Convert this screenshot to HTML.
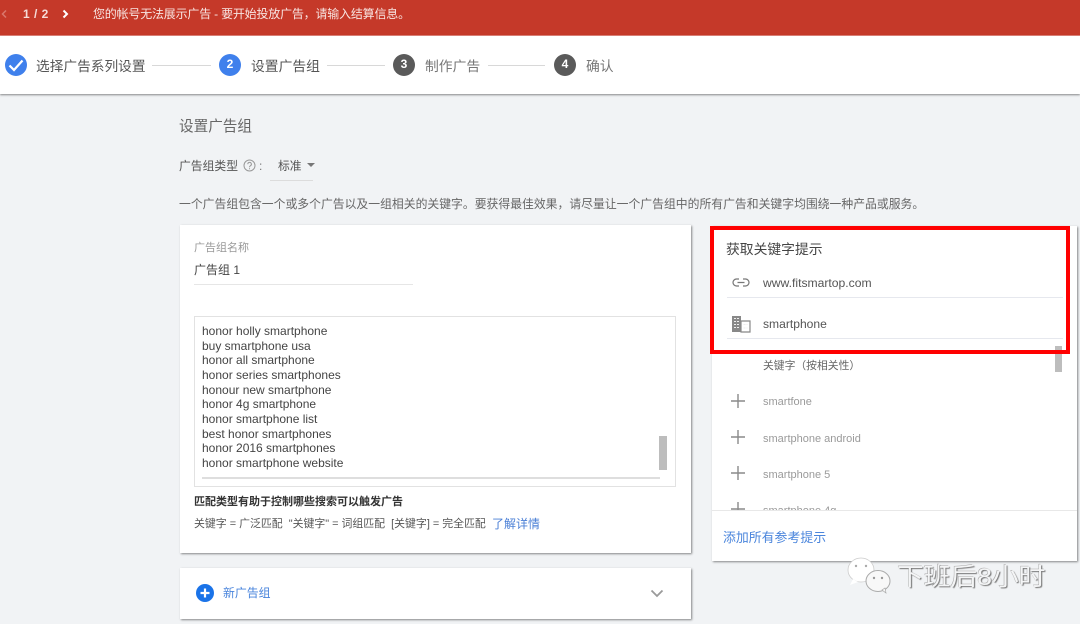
<!DOCTYPE html>
<html style="background:#f1f3f5"><head><meta charset="utf-8">
<style>
html,body{margin:0;padding:0}
body{width:1080px;height:624px;overflow:hidden;background:#f1f3f5;position:relative;font-family:"Liberation Sans","Noto Sans CJK SC",sans-serif;color:#555;filter:blur(.3px)}
.t{position:absolute;white-space:nowrap;line-height:18px;height:18px}
.b{position:absolute}
.card{position:absolute;background:#fff;box-shadow:1px 1px 2px rgba(0,0,0,.45)}
.c{position:absolute;width:22px;height:22px;border-radius:50%;color:#fff;font-size:12px;line-height:21px;text-align:center;font-weight:bold}
.ln{position:absolute;height:1px;background:#d8d8d8}
.k{color:#444;font-size:12px;line-height:14.65px}
</style></head><body>
<div class="b" style="left:0;top:0;width:1080px;height:35px;background:#c53929"></div>
<div class="b" style="left:0;top:35px;width:1080px;height:1px;background:#e0837a"></div>
<div class="b" style="left:0;top:36px;width:1080px;height:58px;background:#fff;box-shadow:0 1px 2px rgba(0,0,0,.45)"></div>
<svg class="b" style="left:0;top:6px" width="80" height="16"><path d="M6 4.500L2.500 8 6 11.500" fill="none" stroke="#d9776c" stroke-width="1.500"/><path d="M63.500 4.500L67 8l-3.500 3.500" fill="none" stroke="#fff" stroke-width="2"/></svg>
<div class="t" style="left:23px;top:5px;font-size:12px;color:#f6dcd8;font-weight:bold;letter-spacing:.5px">1 / 2</div>
<div class="t" style="left:93px;top:5px;font-size:12px;color:#f8e4e1;letter-spacing:-.2px">您的帐号无法展示广告 - 要开始投放广告，请输入结算信息。</div>

<svg class="b" style="left:5px;top:54px" width="22" height="22"><circle cx="11" cy="11" r="11" fill="#3f80ec"/><path d="M4.500 11.500l4.500 4.500 8.500-9.500" fill="none" stroke="#fff" stroke-width="2.200"/></svg>
<div class="t" style="left:36px;top:58px;font-size:13.700px;color:#555">选择广告系列设置</div>
<div class="ln" style="left:152px;top:65px;width:59px"></div>
<div class="c" style="left:219px;top:54px;background:#3f80ec">2</div>
<div class="t" style="left:251px;top:58px;font-size:13.800px;color:#555">设置广告组</div>
<div class="ln" style="left:327px;top:65px;width:58px"></div>
<div class="c" style="left:393px;top:54px;background:#5a5a5a">3</div>
<div class="t" style="left:425px;top:58px;font-size:13.800px;color:#777">制作广告</div>
<div class="ln" style="left:488px;top:65px;width:57px"></div>
<div class="c" style="left:554px;top:54px;background:#5a5a5a">4</div>
<div class="t" style="left:586px;top:58px;font-size:13.800px;color:#777">确认</div>

<div class="t" style="left:179px;top:118px;font-size:14.600px;color:#666">设置广告组</div>
<div class="t" style="left:179px;top:157px;font-size:11.800px;color:#555">广告组类型</div>
<svg class="b" style="left:242px;top:158px" width="15" height="15"><circle cx="7.500" cy="7.500" r="5.500" fill="none" stroke="#999" stroke-width="1"/><path d="M5.800 6.200a1.800 1.800 0 1 1 2.700 1.500c-.6.400-1 .7-1 1.500M7.500 10.200v1" fill="none" stroke="#999" stroke-width="1"/></svg>
<div class="t" style="left:259px;top:157px;font-size:12px;color:#777">:</div>
<div class="t" style="left:278px;top:157px;font-size:11.800px;color:#555">标准</div>
<div class="b" style="left:307px;top:163px;width:0;height:0;border-left:4.500px solid transparent;border-right:4.500px solid transparent;border-top:4.500px solid #777"></div>
<div class="ln" style="top:180px;width:43px;background:#dcdcdc;left:270px"></div>
<div class="t" style="left:179px;top:195px;font-size:11.840px;color:#666">一个广告组包含一个或多个广告以及一组相关的关键字。要获得最佳效果，请尽量让一个广告组中的所有广告和关键字均围绕一种产品或服务。</div>

<div class="card" style="left:180px;top:225px;width:511px;height:328px"></div>
<div class="t" style="left:194px;top:239px;font-size:11px;color:#999">广告组名称</div>
<div class="t" style="left:194px;top:261px;font-size:12px;color:#444">广告组 1</div>
<div class="ln" style="left:194px;top:284px;width:219px;background:#e6e6e6"></div>
<div class="b" style="left:194px;top:316px;width:480px;height:169px;border:1px solid #e2e2e2"></div>
<div class="t k" style="left:202px;top:324px;height:auto;line-height:14.650px;white-space:pre">honor holly smartphone
buy smartphone usa
honor all smartphone
honor series smartphones
honour new smartphone
honor 4g smartphone
honor smartphone list
best honor smartphones
honor 2016 smartphones
honor smartphone website</div>
<div class="b" style="left:659px;top:436px;width:8px;height:34px;background:#bdbdbd"></div>
<div class="b" style="left:202px;top:477px;width:458px;height:2px;background:#dedede"></div>
<div class="t" style="left:194px;top:493px;font-size:11px;color:#333;font-weight:bold">匹配类型有助于控制哪些搜索可以触发广告</div>
<div class="t" style="left:194px;top:515px;font-size:10.900px;color:#555">关键字 = 广泛匹配 &nbsp;"关键字" = 词组匹配 &nbsp;[关键字] = 完全匹配</div>
<div class="t" style="left:492px;top:515px;font-size:12px;color:#4a7fd6">了解详情</div>

<div class="card" style="left:180px;top:568px;width:511px;height:51px"></div>
<svg class="b" style="left:195px;top:583px" width="20" height="20"><circle cx="10" cy="10" r="9" fill="#1a73e8"/><path d="M10 5.500v9M5.500 10h9" stroke="#fff" stroke-width="2.200"/></svg>
<div class="t" style="left:223px;top:584px;font-size:11.900px;color:#4a85dc">新广告组</div>
<svg class="b" style="left:650px;top:587px" width="14" height="12"><path d="M1.500 3.500L7 9l5.500-5.500" fill="none" stroke="#9a9a9a" stroke-width="1.800"/></svg>

<div class="card" style="left:712px;top:226px;width:365px;height:335px"></div>
<div class="t" style="left:726px;top:241px;font-size:13.800px;color:#444">获取关键字提示</div>
<svg class="b" style="left:731px;top:276px" width="20" height="14"><path d="M8 3H5.500a3.500 3.500 0 0 0 0 7H8M12 3h2.500a3.500 3.500 0 0 1 0 7H12M6.500 6.500h7" fill="none" stroke="#777" stroke-width="1.200"/></svg>
<div class="t" style="left:763px;top:274px;font-size:12.150px;color:#555">www.fitsmartop.com</div>
<div class="ln" style="left:727px;top:297px;width:336px;background:#e6e8ee"></div>
<svg class="b" style="left:731px;top:315px" width="20" height="18"><path d="M1 1h9v16H1z" fill="#888"/><path d="M10 6h9v11h-9z" fill="#fff" stroke="#888" stroke-width="1.200"/><path d="M3 3.500h5M3 6.500h5M3 9.500h5M3 12.500h5M12.500 9.500h4M12.500 13h4" stroke="#eee" stroke-width="1.100" stroke-dasharray="2 1"/></svg>
<div class="t" style="left:763px;top:315px;font-size:12.100px;color:#555">smartphone</div>
<div class="ln" style="left:727px;top:338px;width:336px;background:#e6e8ee"></div>
<div class="t" style="left:763px;top:357px;font-size:10.800px;color:#666">关键字（按相关性）</div>
<div class="b" style="left:1055px;top:346px;width:7px;height:26px;background:#bdbdbd"></div>
<svg class="b" style="left:730px;top:393px" width="16" height="126"><path d="M8 1v14M1 8h14M8 37v14M1 44h14M8 73v14M1 80h14M8 109v14M1 116h14" stroke="#8a8a8a" stroke-width="1.400"/></svg>
<div class="t" style="left:763px;top:393px;font-size:11px;color:#9a9a9a">smartfone</div>
<div class="t" style="left:763px;top:430px;font-size:11px;color:#9a9a9a">smartphone android</div>
<div class="t" style="left:763px;top:466px;font-size:11px;color:#9a9a9a">smartphone 5</div>
<div class="t" style="left:763px;top:502px;font-size:11px;color:#9a9a9a">smartphone 4g</div>
<div class="b" style="left:712px;top:510px;width:365px;height:51px;background:#fff;border-top:1px solid #e8e8e8;box-sizing:border-box"></div>
<div class="t" style="left:723px;top:529px;font-size:12.900px;color:#4a85dc">添加所有参考提示</div>

<div class="b" style="left:710px;top:226px;width:360px;height:128px;box-sizing:border-box;border:4px solid #f00"></div>

<svg class="b" style="left:846px;top:557px" width="48" height="37"><ellipse cx="15" cy="13" rx="13" ry="12" fill="#fff" stroke="#ccc" stroke-width=".8"/><path d="M7 22l-3 6 8-3z" fill="#fff"/><ellipse cx="32" cy="24" rx="12" ry="10.500" fill="#f8f8f8" stroke="#aaa" stroke-width="1"/><path d="M36 33l4 3-1-5z" fill="#f8f8f8" stroke="#aaa" stroke-width=".7"/><circle cx="10" cy="9" r="1.200" fill="#aaa"/><circle cx="20" cy="9" r="1.200" fill="#aaa"/><circle cx="28" cy="21" r="1.200" fill="#999"/><circle cx="36" cy="21" r="1.200" fill="#999"/></svg>
<div class="t" style="left:897px;top:564px;height:28px;line-height:28px;font-size:24.500px;letter-spacing:0;transform-origin:0 50%;transform:scaleX(1.090);color:#f4f5f6;text-shadow:1px 1px 1px #777,-.5px -.5px 0 #aaa">下班后8小时</div>
</body></html>
